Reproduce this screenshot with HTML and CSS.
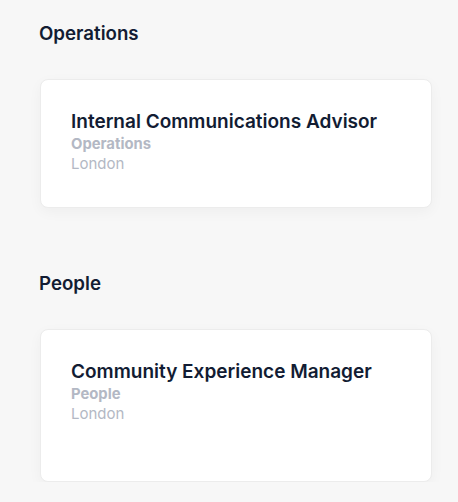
FILE: index.html
```html
<!DOCTYPE html>
<html>
<head>
<meta charset="utf-8">
<link rel="stylesheet" href="styles.css">
</head>
<body>
<main class="page">
  <section class="group">
    <h2 class="group-title">Operations</h2>
    <div class="card">
      <h3 class="job-title">Internal Communications Advisor</h3>
      <div class="job-dept">Operations</div>
      <div class="job-loc">London</div>
    </div>
  </section>
  <section class="group">
    <h2 class="group-title">People</h2>
    <div class="card card-tall">
      <h3 class="job-title">Community Experience Manager</h3>
      <div class="job-dept">People</div>
      <div class="job-loc">London</div>
    </div>
  </section>
</main>
</body>
</html>
```
FILE: styles.css
```css
* { box-sizing: border-box; }
html, body { margin: 0; padding: 0; }
body {
  background: #f7f7f7;
  font-family: Inter, "Noto Sans", sans-serif;
  color: #121c33;
}
.page {
  padding: 21px 26px 0 39px;
}
.group {
  display: flex;
  flex-direction: column;
  margin-bottom: 63px;
}
.group:last-child { margin-bottom: 0; }
.group-title {
  margin: 0 0 32px 0;
  font-size: 18.7px;
  line-height: 26px;
  font-weight: 600;
  color: #121c33;
}
.card {
  margin-left: 1px;
  background: #fff;
  border: 1px solid #ececec;
  border-radius: 8px;
  box-shadow: 0 4px 14px rgba(0,0,0,0.04);
  padding: 29px 30px 30px 30px;
  height: 129px;
}
.card-tall { height: 153px; }
.job-title {
  margin: 0;
  font-size: 19px;
  line-height: 25px;
  font-weight: 600;
  color: #121c33;
}
.job-dept {
  font-size: 14.8px;
  line-height: 20px;
  font-weight: 700;
  color: #b3b8c4;
}
.job-loc {
  font-size: 15px;
  line-height: 20px;
  font-weight: 400;
  color: #b3b8c4;
}
```
